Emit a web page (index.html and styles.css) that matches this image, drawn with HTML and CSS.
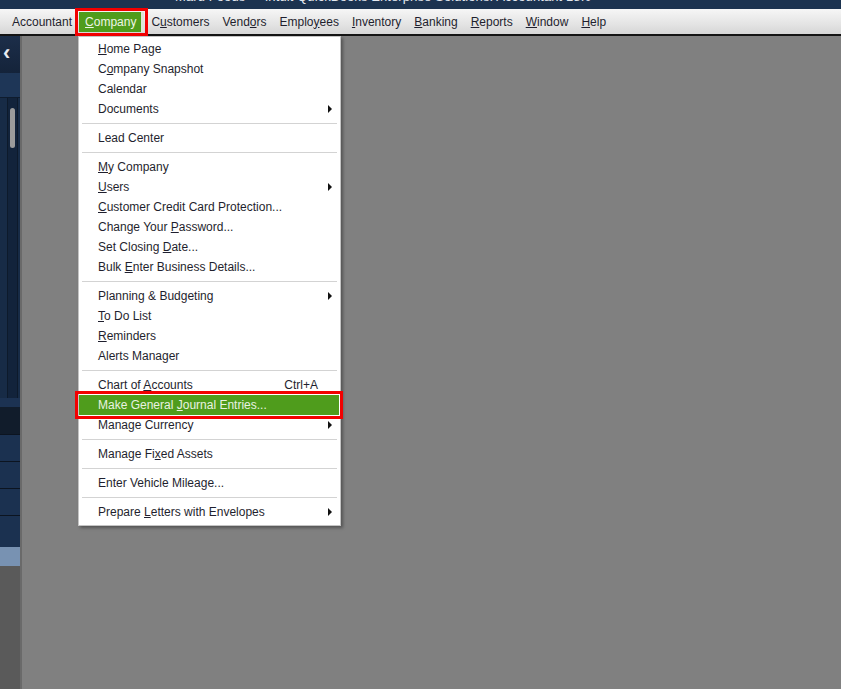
FILE: index.html
```html
<!DOCTYPE html>
<html lang="en">
<head>
  <meta charset="UTF-8">
  <title>QuickBooks - Company Menu</title>
  <link rel="stylesheet" href="styles.css">
</head>
<body>

<div class="titlebar">
  <span class="title-text">Maru Foods &nbsp;-&nbsp; Intuit QuickBooks Enterprise Solutions: Accountant 18.0</span>
</div>

<nav class="menubar">
  <span class="menu-item">Accountant</span>
  <span class="menu-item active"><u>C</u>ompany</span>
  <span class="menu-item">C<u>u</u>stomers</span>
  <span class="menu-item">Vend<u>o</u>rs</span>
  <span class="menu-item">Emplo<u>y</u>ees</span>
  <span class="menu-item"><u>I</u>nventory</span>
  <span class="menu-item"><u>B</u>anking</span>
  <span class="menu-item"><u>R</u>eports</span>
  <span class="menu-item"><u>W</u>indow</span>
  <span class="menu-item"><u>H</u>elp</span>
</nav>

<div class="workspace">
  <aside class="sidebar">
    <div class="side-head"><span class="chevron">&#8249;</span></div>
    <div class="side-band"></div>
    <div class="side-list">
      <div class="side-scroll"><div class="thumb"></div></div>
    </div>
    <div class="side-band small"></div>
    <div class="side-dark"></div>
    <div class="side-row"></div>
    <div class="side-row"></div>
    <div class="side-row"></div>
    <div class="side-row tall"></div>
    <div class="side-selected"></div>
    <div class="side-rest"></div>
  </aside>
  <main class="content"></main>
</div>

<!-- Company drop-down -->
<div class="dropdown">
  <div class="dd-item"><span><u>H</u>ome Page</span></div>
  <div class="dd-item"><span>C<u>o</u>mpany Snapshot</span></div>
  <div class="dd-item"><span>Calendar</span></div>
  <div class="dd-item sub"><span>Documents</span><i class="arrow"></i></div>
  <div class="sep"></div>
  <div class="dd-item"><span>Lead Center</span></div>
  <div class="sep"></div>
  <div class="dd-item"><span><u>M</u>y Company</span></div>
  <div class="dd-item sub"><span><u>U</u>sers</span><i class="arrow"></i></div>
  <div class="dd-item"><span><u>C</u>ustomer Credit Card Protection...</span></div>
  <div class="dd-item"><span>Change Your <u>P</u>assword...</span></div>
  <div class="dd-item"><span>Set Closing <u>D</u>ate...</span></div>
  <div class="dd-item"><span>Bulk <u>E</u>nter Business Details...</span></div>
  <div class="sep"></div>
  <div class="dd-item sub"><span>Plannin<u>g</u> &amp; Budgeting</span><i class="arrow"></i></div>
  <div class="dd-item"><span><u>T</u>o Do List</span></div>
  <div class="dd-item"><span><u>R</u>eminders</span></div>
  <div class="dd-item"><span>Alerts Manager</span></div>
  <div class="sep"></div>
  <div class="dd-item"><span>Chart of <u>A</u>ccounts</span><span class="shortcut">Ctrl+A</span></div>
  <div class="dd-item selected"><span>Make General <u>J</u>ournal Entries...</span></div>
  <div class="dd-item sub"><span>Manage Currency</span><i class="arrow"></i></div>
  <div class="sep"></div>
  <div class="dd-item"><span>Manage Fi<u>x</u>ed Assets</span></div>
  <div class="sep"></div>
  <div class="dd-item"><span>Enter Vehicle Mileage...</span></div>
  <div class="sep"></div>
  <div class="dd-item sub"><span>Prepare <u>L</u>etters with Envelopes</span><i class="arrow"></i></div>
</div>

</body>
</html>
```

FILE: styles.css
```css
* { box-sizing: border-box; }

html, body {
  height: 100%;
}

body {
  margin: 0;
  font-family: 'Liberation Sans', Arial, sans-serif;
  font-size: 12px;
  color: #1f1f2e;
  background: #808080;
  overflow: hidden;
  display: flex;
  flex-direction: column;
}

u {
  text-decoration: underline;
  text-underline-offset: 1px;
}

/* title bar (mostly scrolled off the top) */
.titlebar {
  height: 9px;
  background: #1c3350;
  overflow: hidden;
  padding-left: 175px;
  flex-shrink: 0;
}
.title-text {
  display: block;
  margin-top: -11px;
  font-size: 13px;
  line-height: 15px;
  letter-spacing: 0.1px;
  color: #e4e9f0;
  white-space: nowrap;
}

/* menu bar */
.menubar {
  height: 27px;
  display: flex;
  align-items: center;
  padding: 0 0 0 6px;
  background: linear-gradient(#f6f6f6, #e4e4e4 60%, #d6d6d6);
  border-bottom: 2px solid #141414;
  flex-shrink: 0;
}
.menu-item {
  height: 20px;
  line-height: 20px;
  padding: 0 6px;
  margin-right: 1px;
  white-space: nowrap;
}
.menu-item.active {
  background: linear-gradient(to right, #4f9c1c 96%, #dfe6d8 96%);
  color: #eef5e6;
  padding-right: 8px;
  outline: 3px solid #f20000;
  outline-offset: 1px;
}

/* workspace */
.workspace {
  flex: 1;
  display: flex;
}
.sidebar {
  width: 22px;
  display: flex;
  flex-direction: column;
  background: #1b3150;
  border-right: 2px solid #6a6a6a;
}
.side-head {
  height: 37px;
  background: linear-gradient(#1c2e49, #14233a);
  color: #e8ecf2;
  font-size: 22px;
  line-height: 37px;
  font-weight: bold;
  padding-left: 3px;
}
.chevron {
  display: block;
  margin-top: -2px;
}
.side-band {
  height: 24px;
  background: #1e3657;
}
.side-band.small {
  height: 9px;
  background: #1c3252;
}
.side-list {
  height: 301px;
  background: #172b46;
  border-top: 1px solid #0f1c2e;
  padding-left: 7px;
}
.side-scroll {
  width: 11px;
  height: 100%;
  background: #12233b;
  border-left: 1px solid #0d1a2b;
  border-right: 1px solid #0d1a2b;
  padding: 10px 0 0 2px;
}
.thumb {
  width: 5px;
  height: 40px;
  background: #9b9b9b;
  border-radius: 3px;
}
.side-dark {
  height: 27px;
  background: #111c2b;
}
.side-row {
  height: 27px;
  background: #1b3150;
  border-top: 1px solid #0c1420;
}
.side-row.tall {
  height: 32px;
}
.side-selected {
  height: 19px;
  background: #7892b2;
}
.side-rest {
  flex: 1;
  background: #5a5a5a;
}
.content {
  flex: 1;
  background: #808080;
}

/* drop-down menu */
.dropdown {
  position: absolute;
  left: 78px;
  top: 36px;
  width: 263px;
  padding: 2px 0 3px;
  background: #ffffff;
  border: 1px solid #c4c4c4;
  box-shadow: 2px 2px 3px rgba(0, 0, 0, 0.35);
}
.dd-item {
  height: 20px;
  line-height: 20px;
  display: grid;
  grid-template-columns: 1fr auto 22px;
  padding-left: 19px;
  white-space: nowrap;
}
.dd-item .arrow {
  grid-column: 3;
  align-self: center;
  justify-self: start;
  margin-left: 10px;
  width: 0;
  height: 0;
  border-left: 4px solid #111;
  border-top: 4px solid transparent;
  border-bottom: 4px solid transparent;
}
.shortcut {
  grid-column: 2;
}
.dd-item.selected {
  background: #4f9c1c;
  color: #e9f2e1;
  margin-right: 1px;
  outline: 3px solid #f20000;
  outline-offset: 1px;
}
.sep {
  height: 1px;
  margin: 4px 3px 4px 3px;
  background: #d3d3d3;
}
```
